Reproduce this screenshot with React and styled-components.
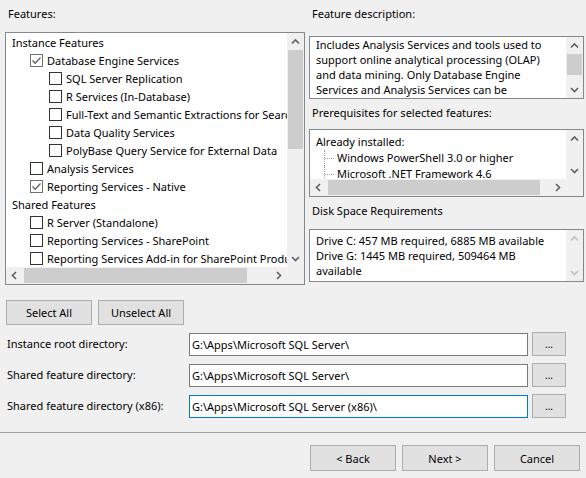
import React from "react";
import styled, { createGlobalStyle } from "styled-components";

const GlobalStyle = createGlobalStyle`
  html, body {
    margin: 0;
    padding: 0;
    background: #f0f0f0;
  }
  body {
    font-family: "Noto Sans", "Open Sans", sans-serif;
    font-size: 11px;
    color: #000;
  }
`;

const Page = styled.div`
  width: 586px;
  height: 478px;
  box-sizing: border-box;
  overflow: hidden;
  display: flex;
  flex-direction: column;
`;

const TopArea = styled.div`
  display: grid;
  grid-template-columns: 300px 275px;
  column-gap: 4px;
  padding: 0 0 0 5px;
`;

const Column = styled.div`
  display: flex;
  flex-direction: column;
`;

const Caption = styled.div`
  line-height: 16px;
  padding: ${(p) => p.$top || 6}px 0 0 ${(p) => p.$indent || 3}px;
  margin-bottom: ${(p) => p.$gap || 10}px;
`;

const Frame = styled.div`
  box-sizing: border-box;
  height: ${(p) => p.$height}px;
  border: 1px solid #828790;
  background: #fff;
  display: grid;
  grid-template-columns: minmax(0, 1fr) 17px;
  grid-template-rows: ${(p) => (p.$hscroll ? "minmax(0, 1fr) 17px" : "minmax(0, 1fr)")};
  overflow: hidden;
`;

const Content = styled.div`
  overflow: hidden;
  white-space: nowrap;
  padding: ${(p) => p.$pad || "0"};
  line-height: ${(p) => p.$line || 15}px;
`;

const Wrap = styled(Content)`
  white-space: normal;
`;

/* ---------- scrollbars ---------- */

const VBar = styled.div`
  display: flex;
  flex-direction: column;
  background: #f0f0f0;
`;

const HBar = styled.div`
  display: flex;
  background: #f0f0f0;
`;

const Track = styled.div`
  flex: 1;
  display: flex;
  flex-direction: ${(p) => (p.$horizontal ? "row" : "column")};
  padding: ${(p) => (p.$horizontal ? `0 0 0 ${p.$offset}px` : `${p.$offset}px 0 0`)};
`;

const Thumb = styled.div`
  background: #cdcdcd;
  ${(p) => (p.$horizontal ? `width: ${p.$size}px; margin: 1px 0;` : `height: ${p.$size}px; margin: 0 1px;`)}
`;

const Corner = styled.div`
  background: #f0f0f0;
`;

const ArrowBox = styled.div`
  width: 17px;
  height: 17px;
  flex: none;
  display: flex;
  align-items: center;
  justify-content: center;
`;

const arrowPaths = {
  up: "M5 10.5 L8.5 7 L12 10.5",
  down: "M5 7 L8.5 10.5 L12 7",
  left: "M10 5 L6.5 8.5 L10 12",
  right: "M7 5 L10.5 8.5 L7 12",
};

function Arrow({ dir, disabled }) {
  return (
    <ArrowBox>
      <svg width="17" height="17" viewBox="0 0 17 17">
        <path
          d={arrowPaths[dir]}
          fill="none"
          stroke={disabled ? "#c0c0c0" : "#606060"}
          strokeWidth="1.6"
        />
      </svg>
    </ArrowBox>
  );
}

function VScroll({ offset = 0, size = 0, disabled }) {
  return (
    <VBar>
      <Arrow dir="up" disabled={disabled} />
      <Track $offset={offset}>{size > 0 && <Thumb $size={size} />}</Track>
      <Arrow dir="down" disabled={disabled} />
    </VBar>
  );
}

function HScroll({ offset = 0, size = 0 }) {
  return (
    <HBar>
      <Arrow dir="left" />
      <Track $horizontal $offset={offset}>
        <Thumb $horizontal $size={size} />
      </Track>
      <Arrow dir="right" />
    </HBar>
  );
}

/* ---------- feature tree ---------- */

const TreeRow = styled.div`
  height: 18px;
  display: flex;
  align-items: center;
  gap: 4px;
  padding-left: ${(p) => (p.$level === 0 ? 6 : 5 + p.$level * 19)}px;
`;

const Box = styled.span`
  flex: none;
  box-sizing: border-box;
  width: 13px;
  height: 13px;
  border: 1px solid ${(p) => (p.$checked ? "#707070" : "#333")};
  background: #fff;
  display: flex;
  align-items: center;
  justify-content: center;
`;

function Check({ checked }) {
  return (
    <Box $checked={checked}>
      {checked && (
        <svg width="11" height="11" viewBox="0 0 11 11">
          <path d="M1.5 5.5 L4.2 8.2 L9.5 2.5" fill="none" stroke="#606060" strokeWidth="1.3" />
        </svg>
      )}
    </Box>
  );
}

const features = [
  { label: "Instance Features", level: 0 },
  { label: "Database Engine Services", level: 1, checked: true },
  { label: "SQL Server Replication", level: 2 },
  { label: "R Services (In-Database)", level: 2 },
  { label: "Full-Text and Semantic Extractions for Search", level: 2 },
  { label: "Data Quality Services", level: 2 },
  { label: "PolyBase Query Service for External Data", level: 2 },
  { label: "Analysis Services", level: 1 },
  { label: "Reporting Services - Native", level: 1, checked: true },
  { label: "Shared Features", level: 0 },
  { label: "R Server (Standalone)", level: 1 },
  { label: "Reporting Services - SharePoint", level: 1 },
  { label: "Reporting Services Add-in for SharePoint Products", level: 1 },
];

/* ---------- prerequisites list ---------- */

const PrereqHead = styled.div`
  padding-left: 5px;
`;

const PrereqItem = styled.div`
  position: relative;
  padding-left: 26px;
  &::before {
    content: "";
    position: absolute;
    left: 13px;
    top: 0;
    height: 100%;
    border-left: 1px dotted #a0a0a0;
  }
  &::after {
    content: "";
    position: absolute;
    left: 14px;
    top: 8px;
    width: 9px;
    border-top: 1px dotted #a0a0a0;
  }
`;

/* ---------- buttons and directories ---------- */

const Button = styled.button`
  box-sizing: border-box;
  width: ${(p) => p.$width || 86}px;
  height: ${(p) => p.$height || 25}px;
  border: 1px solid #adadad;
  background: #e1e1e1;
  font: inherit;
  color: #000;
  padding: 0;
`;

const ButtonRow = styled.div`
  display: flex;
  gap: 6px;
  padding: 15px 0 0 6px;
`;

const DirGrid = styled.div`
  display: grid;
  grid-template-columns: 178px 339px 34px;
  column-gap: 4px;
  row-gap: 7px;
  align-items: center;
  padding: 7px 0 0 7px;
`;

const DirLabel = styled.div`
  line-height: 16px;
`;

const DirInput = styled.div`
  box-sizing: border-box;
  height: 23px;
  border: 1px solid ${(p) => (p.$focused ? "#0078d7" : "#7a7a7a")};
  background: #fff;
  padding: 0 2px;
  line-height: 21px;
  white-space: nowrap;
  overflow: hidden;
`;

const Browse = styled(Button)`
  width: 34px;
  height: 24px;
  font-size: 10px;
  line-height: 18px;
`;

const Separator = styled.div`
  margin-top: 14px;
  border-top: 1px solid #a0a0a0;
`;

const Footer = styled.div`
  display: flex;
  justify-content: flex-end;
  gap: 6px;
  padding: 12px 6px 0 0;
`;

const directories = [
  { label: "Instance root directory:", value: "G:\\Apps\\Microsoft SQL Server\\" },
  { label: "Shared feature directory:", value: "G:\\Apps\\Microsoft SQL Server\\" },
  { label: "Shared feature directory (x86):", value: "G:\\Apps\\Microsoft SQL Server (x86)\\", focused: true },
];

export default function App() {
  return (
    <Page>
      <GlobalStyle />
      <TopArea>
        <Column>
          <Caption>Features:</Caption>
          <Frame $height={253} $hscroll>
            <Content>
              {features.map((f) => (
                <TreeRow key={f.label} $level={f.level}>
                  {f.level > 0 && <Check checked={f.checked} />}
                  <span>{f.label}</span>
                </TreeRow>
              ))}
            </Content>
            <VScroll offset={0} size={99} />
            <HScroll offset={1} size={223} />
            <Corner />
          </Frame>
        </Column>

        <Column>
          <Caption $gap={14}>Feature description:</Caption>
          <Frame $height={63}>
            <Wrap $pad="0 10px 0 6px">
              Includes Analysis Services and tools used to support online analytical
              processing (OLAP) and data mining. Only Database Engine Services and
              Analysis Services can be clustered.
            </Wrap>
            <VScroll offset={0} size={21} />
          </Frame>

          <Caption $top={6} $gap={8}>Prerequisites for selected features:</Caption>
          <Frame $height={68} $hscroll>
            <Content $pad="4px 0 0 1px" $line={16}>
              <PrereqHead>Already installed:</PrereqHead>
              <PrereqItem>Windows PowerShell 3.0 or higher</PrereqItem>
              <PrereqItem>Microsoft .NET Framework 4.6</PrereqItem>
            </Content>
            <VScroll />
            <HScroll offset={1} size={212} />
            <Corner />
          </Frame>

          <Caption $top={6} $gap={10}>Disk Space Requirements</Caption>
          <Frame $height={53}>
            <Wrap $pad="3px 4px 0 6px">
              Drive C: 457 MB required, 6885 MB available
              <br />
              Drive G: 1445 MB required, 509464 MB available
            </Wrap>
            <VScroll disabled />
          </Frame>
        </Column>
      </TopArea>

      <ButtonRow>
        <Button>Select All</Button>
        <Button>Unselect All</Button>
      </ButtonRow>

      <DirGrid>
        {directories.map((d) => (
          <React.Fragment key={d.label}>
            <DirLabel>{d.label}</DirLabel>
            <DirInput $focused={d.focused}>{d.value}</DirInput>
            <Browse>...</Browse>
          </React.Fragment>
        ))}
      </DirGrid>

      <Separator />

      <Footer>
        <Button $height={26}>&lt; Back</Button>
        <Button $height={26}>Next &gt;</Button>
        <Button $height={26}>Cancel</Button>
      </Footer>
    </Page>
  );
}
